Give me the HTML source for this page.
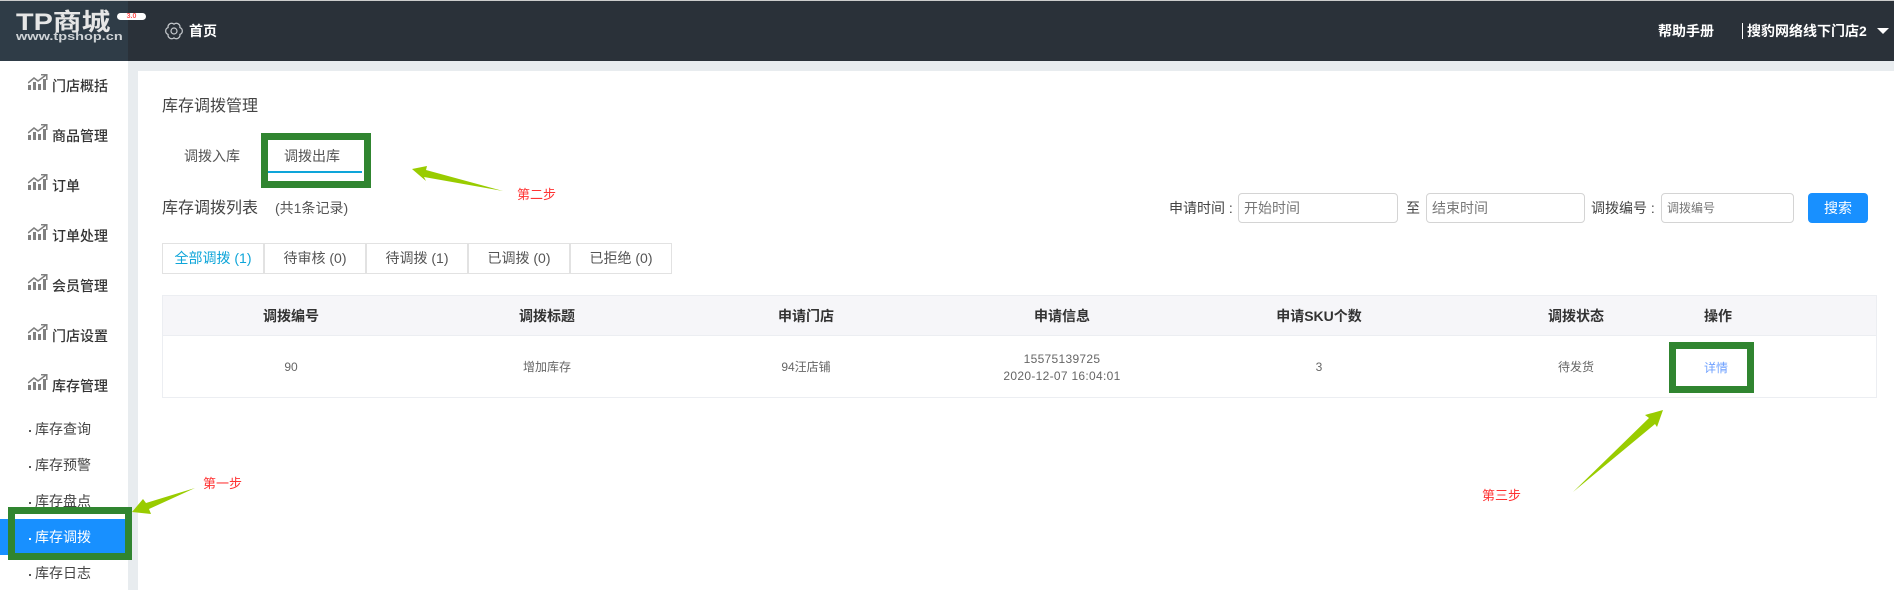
<!DOCTYPE html>
<html lang="zh"><head><meta charset="utf-8"><title>库存调拨管理</title>
<style>
*{box-sizing:border-box;margin:0;padding:0}
html,body{width:1894px;height:590px;overflow:hidden;background:#fff}
body{position:relative;font-family:"Liberation Sans","Noto Sans CJK SC",sans-serif;font-size:14px;color:#444}
.a{position:absolute}
.t{position:absolute;white-space:nowrap;line-height:20px}
.c{position:absolute;white-space:nowrap;line-height:20px;text-align:center;transform:translateX(-50%)}
.m{font-weight:500;color:#333;left:52px}
.s{left:35px;color:#444}
.d{position:absolute;left:29px;width:2px;height:2px;background:#555}
.g{position:absolute;border:7px solid #308530}
.f{position:absolute;top:243px;height:31px;border:1.5px solid #e2e2e2;text-align:center;line-height:28px;color:#555;background:#fff}
.i{position:absolute;top:193px;height:30px;border:1px solid #d4d4d4;border-radius:4px;line-height:28px;color:#777;background:#fff;padding-left:5px}
.h{font-weight:700;color:#333;top:306px}
.b{font-size:12px;color:#666}
.r{color:#f33;font-size:13px}
</style></head><body>
<div class="a" style="left:0;top:0;width:1894px;height:1px;background:#ccc"></div>
<div class="a" style="left:0;top:1px;width:1894px;height:60px;background:#2a3139"></div>
<div class="a" style="left:0;top:1px;width:128px;height:60px;background:#2f3c47"></div>
<div class="t" style="left:16px;top:9px;font-size:24px;line-height:26px;font-weight:700;color:#e6e6e6;transform:scaleX(1.2);transform-origin:left;top:10px">TP商城</div>
<div class="t" style="left:16px;top:29px;font-size:11px;line-height:16px;font-weight:700;color:#cfd3d6;transform:scaleX(1.32);transform-origin:left">www.tpshop.cn</div>
<div class="a" style="left:117px;top:13px;width:29px;height:7px;border-radius:4px;background:#fff;color:#f55;font-size:7px;line-height:7px;text-align:center;font-weight:700">3.0</div>
<svg class="a" style="left:165px;top:22px" width="18" height="18" viewBox="0 0 18 18" fill="none" stroke="#c4c8cc" stroke-width="1.2"><path d="M9 2.200A3.600 3.600 0 0 1 14.900 5.600A3.600 3.600 0 0 1 14.900 12.400A3.600 3.600 0 0 1 9 15.800A3.600 3.600 0 0 1 3.100 12.400A3.600 3.600 0 0 1 3.100 5.600A3.600 3.600 0 0 1 9 2.200Z"/><circle cx="9" cy="9" r="3"/></svg>
<div class="t" style="left:189px;top:21px;color:#fff;font-weight:700">首页</div>
<div class="t" style="left:1658px;top:21px;color:#fff;font-weight:700">帮助手册</div>
<div class="a" style="left:1742px;top:23px;width:1px;height:16px;background:#fff"></div>
<div class="t" style="left:1747px;top:21px;color:#fff;font-weight:700">搜豹网络线下门店2</div>
<div class="a" style="left:1877px;top:28px;border-left:6px solid transparent;border-right:6px solid transparent;border-top:6px solid #fff"></div>

<div class="a" style="left:128px;top:61px;width:10px;height:529px;background:#e8ecef"></div>
<div class="a" style="left:128px;top:61px;width:1766px;height:10px;background:#e8ecef"></div>

<svg width="0" height="0" style="position:absolute"><defs><symbol id="ic" viewBox="0 0 20 16"><path d="M0 16v-5h3v5zM5 16V8h3v8zM10 16v-6h3v6zM15 16V5h3v11z" fill="#808080"/><path d="M0 9l6-5 4 3 8-6M13 .7h5.800V6" fill="none" stroke="#808080" stroke-width="1.500"/></symbol></defs></svg>
<svg class="a" style="left:28px;top:74px" width="20" height="16"><use href="#ic"/></svg><div class="t m" style="top:76px">门店概括</div>
<svg class="a" style="left:28px;top:124px" width="20" height="16"><use href="#ic"/></svg><div class="t m" style="top:126px">商品管理</div>
<svg class="a" style="left:28px;top:174px" width="20" height="16"><use href="#ic"/></svg><div class="t m" style="top:176px">订单</div>
<svg class="a" style="left:28px;top:224px" width="20" height="16"><use href="#ic"/></svg><div class="t m" style="top:226px">订单处理</div>
<svg class="a" style="left:28px;top:274px" width="20" height="16"><use href="#ic"/></svg><div class="t m" style="top:276px">会员管理</div>
<svg class="a" style="left:28px;top:324px" width="20" height="16"><use href="#ic"/></svg><div class="t m" style="top:326px">门店设置</div>
<svg class="a" style="left:28px;top:374px" width="20" height="16"><use href="#ic"/></svg><div class="t m" style="top:376px">库存管理</div>

<div class="d" style="top:430px"></div><div class="t s" style="top:419px">库存查询</div>
<div class="d" style="top:466px"></div><div class="t s" style="top:455px">库存预警</div>
<div class="d" style="top:502px"></div><div class="t s" style="top:491px">库存盘点</div>
<div class="a" style="left:0;top:519px;width:125px;height:36px;background:#1890ff"></div>
<div class="d" style="top:538px;background:#fff"></div><div class="t s" style="top:527px;color:#fff">库存调拨</div>
<div class="d" style="top:574px"></div><div class="t s" style="top:563px">库存日志</div>
<div class="a" style="left:15px;top:514px;width:110px;height:5px;background:#fff"></div>
<div class="g" style="left:8px;top:507px;width:124px;height:53px"></div>

<div class="t" style="left:162px;top:96px;font-size:16px;line-height:22px;color:#444">库存调拨管理</div>
<div class="t" style="left:184px;top:146px;color:#555">调拨入库</div>
<div class="t" style="left:284px;top:146px;color:#555">调拨出库</div>
<div class="a" style="left:268px;top:171px;width:94px;height:2px;background:#0ea5d9"></div>
<div class="g" style="left:261px;top:133px;width:110px;height:55px"></div>
<div class="t" style="left:162px;top:198px;font-size:16px;line-height:22px;color:#444">库存调拨列表</div>
<div class="t" style="left:275px;top:198px;color:#555">(共1条记录)</div>

<div class="f" style="left:162px;width:102px;color:#0ea5d9">全部调拨 (1)</div>
<div class="f" style="left:264px;width:102px">待审核 (0)</div>
<div class="f" style="left:366px;width:102px">待调拨 (1)</div>
<div class="f" style="left:468px;width:102px">已调拨 (0)</div>
<div class="f" style="left:570px;width:102px">已拒绝 (0)</div>

<div class="t" style="left:1169px;top:198px;color:#444">申请时间 :</div>
<div class="i" style="left:1238px;width:160px">开始时间</div>
<div class="t" style="left:1406px;top:198px;color:#444">至</div>
<div class="i" style="left:1426px;width:159px">结束时间</div>
<div class="t" style="left:1591px;top:198px;color:#444">调拨编号 :</div>
<div class="i" style="left:1661px;width:133px;font-size:12px">调拨编号</div>
<div class="a" style="left:1808px;top:193px;width:60px;height:30px;background:#1890ff;border-radius:4px;color:#fff;text-align:center;line-height:30px">搜索</div>

<div class="a" style="left:162px;top:295px;width:1715px;height:103px;border:1.5px solid #eceef2"></div>
<div class="a" style="left:163px;top:296px;width:1713px;height:40px;background:#f6f6f9;border-bottom:1.5px solid #eceef2"></div>
<div class="c h" style="left:291px">调拨编号</div>
<div class="c h" style="left:547px">调拨标题</div>
<div class="c h" style="left:806px">申请门店</div>
<div class="c h" style="left:1062px">申请信息</div>
<div class="c h" style="left:1319px">申请SKU个数</div>
<div class="c h" style="left:1576px">调拨状态</div>
<div class="c h" style="left:1718px">操作</div>
<div class="c b" style="left:291px;top:357px">90</div>
<div class="c b" style="left:547px;top:357px">增加库存</div>
<div class="c b" style="left:806px;top:357px">94汪店铺</div>
<div class="c b" style="left:1062px;top:349px;letter-spacing:.3px">15575139725</div>
<div class="c b" style="left:1062px;top:366px;letter-spacing:.3px">2020-12-07 16:04:01</div>
<div class="c b" style="left:1319px;top:357px">3</div>
<div class="c b" style="left:1576px;top:357px">待发货</div>
<div class="c b" style="left:1716px;top:358px;color:#6ea0ff">详情</div>
<div class="g" style="left:1669px;top:342px;width:85px;height:51px"></div>

<svg class="a" style="left:0;top:0" width="1894" height="590" fill="#9c0">
<polygon points="132,512 143,499 146,503 195,488 149,509 151,514"/>
<polygon points="412,169 427,166 426,170 503,191 424,177 426,181"/>
<polygon points="1663,410 1645,415 1649,418 1573,492 1655,424 1657,427"/>
</svg>
<div class="t r" style="left:203px;top:474px">第一步</div>
<div class="t r" style="left:517px;top:185px">第二步</div>
<div class="t r" style="left:1482px;top:486px">第三步</div>
</body></html>
